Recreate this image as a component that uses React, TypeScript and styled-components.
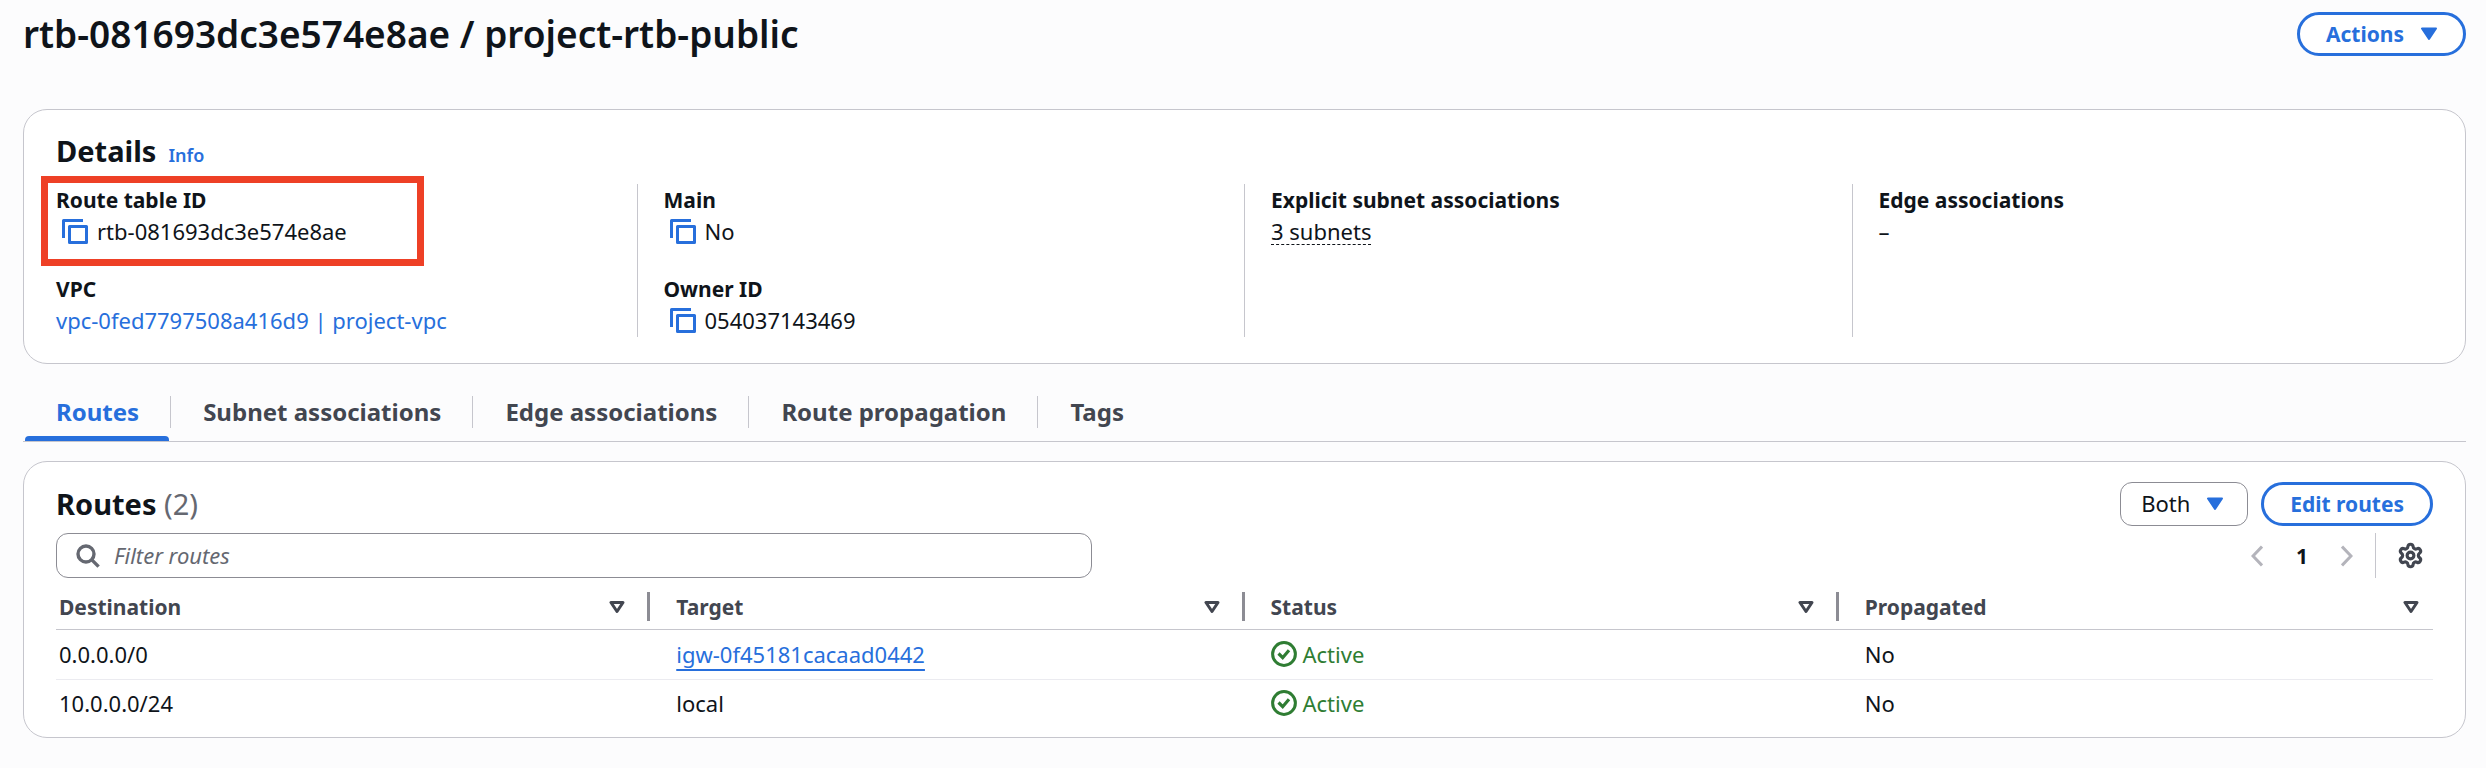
import React from 'react';
import styled, { createGlobalStyle } from 'styled-components';
import { Settings } from 'lucide-react';

const color = {
  page: '#fcfcfd',
  surface: '#ffffff',
  text: '#0f141a',
  heading: '#424650',
  muted: '#656871',
  link: '#276fdc',
  border: '#c6c6cd',
  rowBorder: '#ebebf0',
  control: '#8c8c94',
  disabled: '#b4b4bb',
  success: '#2f7d33',
  highlight: '#ee4026',
};

const GlobalStyle = createGlobalStyle`
  *, *::before, *::after { box-sizing: border-box; }
  body {
    margin: 0;
    background: ${color.page};
    color: ${color.text};
    font-family: "Noto Sans", "Open Sans", sans-serif;
    font-size: 22px;
    line-height: 32px;
  }
  button, input, select { font: inherit; color: inherit; }
  h1, h2, dl, dt, dd { margin: 0; }
  svg { display: block; flex: none; }
`;

const Page = styled.main`
  padding: 12px 20px 30px 23px;
`;

const PageHeader = styled.header`
  display: flex;
  align-items: center;
  justify-content: space-between;
  gap: 20px;
  margin-bottom: 53px;
`;

const PageTitle = styled.h1`
  font-size: 37px;
  font-weight: 600;
  line-height: 44px;
`;

const OutlineButton = styled.button`
  display: flex;
  align-items: center;
  gap: 17px;
  height: 44px;
  padding: 0 26px;
  border: 3px solid ${color.link};
  border-radius: 22px;
  background: ${color.surface};
  color: ${color.link};
  font-size: 21px;
  font-weight: 700;
  white-space: nowrap;
`;

const Card = styled.section`
  padding: 20px 32px 9px;
  border: 1px solid ${color.border};
  border-radius: 24px;
  background: ${color.surface};
`;

const DetailsCard = styled(Card)`
  padding: 21px 32px 26px;
`;

const SectionHeader = styled.div`
  display: flex;
  align-items: baseline;
  gap: 12px;
  margin-bottom: 13px;
`;

const SectionTitle = styled.h2`
  font-size: 29px;
  font-weight: 700;
  line-height: 40px;
`;

const Count = styled.span`
  color: ${color.muted};
  font-weight: 400;
`;

const InfoLink = styled.a`
  color: ${color.link};
  font-size: 18px;
  font-weight: 600;
  text-decoration: none;
`;

const DetailsGrid = styled.div`
  display: grid;
  grid-template-columns: repeat(4, 1fr);
  margin: 0 -26px 0 -27px;
`;

const DetailsColumn = styled.dl`
  display: flex;
  flex-direction: column;
  gap: 27px;
  padding: 0 26px 2px;
  border-left: 1px solid ${color.border};

  &:first-child { border-left-color: transparent; }
`;

const Field = styled.div`
  position: relative;
`;

const FieldLabel = styled.dt`
  font-size: 21px;
  font-weight: 700;
`;

const FieldValue = styled.dd`
  display: flex;
  align-items: center;
  line-height: 30px;
`;

const Highlight = styled.div`
  position: absolute;
  top: -8px;
  left: -15px;
  width: 383px;
  height: 90px;
  border: 7px solid ${color.highlight};
  pointer-events: none;
`;

const IconButton = styled.button`
  display: flex;
  padding: 0;
  border: 0;
  background: none;
`;

const CopyButton = styled(IconButton)`
  margin: 0 9px 0 6px;
  color: ${color.link};
`;

const TextLink = styled.a<{ $underlined?: boolean }>`
  color: ${color.link};
  text-decoration: ${p => (p.$underlined ? 'underline' : 'none')};
  text-decoration-thickness: 2px;
  text-decoration-skip-ink: none;
  text-underline-offset: 6px;
`;

const PopoverTrigger = styled.button`
  padding: 0;
  border: 0;
  background: none;
  text-decoration: underline dashed 1px;
  text-decoration-skip-ink: none;
  text-underline-offset: 4px;
`;

const TabList = styled.div`
  display: flex;
  margin: 32px 0 19px;
  padding-left: 1px;
  border-bottom: 1px solid ${color.border};
`;

const TabItem = styled.div`
  display: flex;
  align-items: flex-start;

  & + &::before {
    content: '';
    width: 1px;
    height: 32px;
    background: ${color.border};
  }
`;

const Tab = styled.button<{ $active?: boolean }>`
  position: relative;
  padding: 0 31px 13px 32px;
  border: 0;
  background: none;
  color: ${p => (p.$active ? color.link : color.heading)};
  font-size: 24px;
  font-weight: 700;
  line-height: 32px;

  &::after {
    content: '';
    position: absolute;
    inset: auto 1px 0;
    height: 5px;
    border-radius: 4px 4px 0 0;
    background: ${p => (p.$active ? color.link : 'transparent')};
  }
`;

const Toolbar = styled.div`
  display: flex;
  align-items: center;
  justify-content: space-between;
  gap: 20px;
`;

const FilterBar = styled(Toolbar)`
  height: 45px;
  margin: 7px 0 6px;
`;

const Actions = styled.div`
  display: flex;
  gap: 13px;
`;

const SelectBox = styled.label`
  display: grid;
  align-items: center;
  color: ${color.link};

  & > * { grid-area: 1 / 1; }
  & > svg {
    justify-self: end;
    margin-right: 25px;
    pointer-events: none;
  }
`;

const Select = styled.select`
  width: 128px;
  height: 44px;
  padding: 0 20px 2px;
  border: 1px solid ${color.control};
  border-radius: 12px;
  background: ${color.surface};
  color: ${color.text};
  appearance: none;
`;

const SearchBox = styled.label`
  display: flex;
  align-items: center;
  gap: 14px;
  width: 100%;
  max-width: 1036px;
  height: 45px;
  padding: 0 19px;
  border: 1px solid ${color.control};
  border-radius: 12px;
  color: ${color.muted};
`;

const SearchInput = styled.input`
  flex: 1;
  min-width: 0;
  padding: 0 0 2px;
  border: 0;
  outline: 0;
  background: none;
  color: ${color.text};

  &::placeholder {
    color: ${color.muted};
    font-style: italic;
    opacity: 1;
  }
`;

const Pagination = styled.nav`
  display: flex;
  align-items: center;
  height: 45px;
  color: ${color.disabled};
`;

const PageNumber = styled.button`
  padding: 0 33px;
  border: 0;
  background: none;
  color: ${color.text};
  font-size: 21px;
  font-weight: 700;
`;

const Preferences = styled.div`
  display: flex;
  align-items: center;
  height: 45px;
  margin-left: 22px;
  padding: 0 9px 0 21px;
  border-left: 1px solid ${color.border};
  color: ${color.heading};
`;

const Table = styled.table`
  width: 100%;
  border-spacing: 0;
  table-layout: fixed;
`;

const HeaderCell = styled.th`
  height: 46px;
  padding: 0 0 0 26px;
  border-bottom: 1px solid ${color.border};
  color: ${color.heading};
  font-size: 21px;
  font-weight: 700;
  text-align: left;

  &:first-child { padding-left: 3px; }
  &:last-child { padding-right: 14px; }
`;

const HeaderContent = styled.div`
  display: flex;
  align-items: center;
`;

const SortButton = styled.button`
  display: flex;
  flex: 1;
  align-items: center;
  justify-content: space-between;
  padding: 0;
  border: 0;
  background: none;
`;

const Resizer = styled.span`
  width: 3px;
  height: 29px;
  margin-left: 22px;
  background: ${color.control};
`;

const Cell = styled.td`
  height: 50px;
  padding: 0 0 2px 26px;
  border-bottom: 1px solid ${color.rowBorder};

  &:first-child { padding-left: 3px; }
  tr:last-child > & {
    height: 48px;
    border-bottom: 0;
  }
`;

const Status = styled.span`
  display: flex;
  align-items: center;
  gap: 6px;
  color: ${color.success};
`;

const CaretFilled = () => (
  <svg width="16" height="14" viewBox="0 0 16 14" fill="currentColor" stroke="currentColor" strokeWidth="2" strokeLinejoin="round" aria-hidden="true">
    <path d="M1 1.5h14L8 12z" />
  </svg>
);

const CaretOutline = () => (
  <svg width="16" height="14" viewBox="0 0 16 14" fill="none" stroke="currentColor" strokeWidth="3" strokeLinejoin="round" aria-hidden="true">
    <path d="M2 2.5h12L8 11.5z" />
  </svg>
);

const CopyIcon = () => (
  <svg width="26" height="25" viewBox="0 0 26 25" fill="none" stroke="currentColor" strokeWidth="3" aria-hidden="true">
    <path d="M1.5 19V1.5H21" strokeLinejoin="round" />
    <path d="M7.5 7.5h17v16h-17z" strokeLinejoin="round" />
  </svg>
);

const SearchIcon = () => (
  <svg width="24" height="24" viewBox="0 0 24 24" fill="none" stroke="currentColor" strokeWidth="3.4" aria-hidden="true">
    <circle cx="10" cy="10" r="8" />
    <path d="M15.6 15.6l7 7" />
  </svg>
);

const Chevron = ({ d }: { d: string }) => (
  <svg width="12" height="22" viewBox="0 0 12 22" fill="none" stroke="currentColor" strokeWidth="3" aria-hidden="true">
    <path d={d} />
  </svg>
);

const SuccessIcon = () => (
  <svg width="26" height="26" viewBox="0 0 26 26" fill="none" stroke="currentColor" strokeWidth="3" aria-hidden="true">
    <circle cx="13" cy="13" r="11.4" />
    <path d="M7.5 12.5l4.2 4.2 6.3-7.5" strokeWidth="3.2" />
  </svg>
);

const Copyable = ({ text }: { text: string }) => (
  <>
    <CopyButton aria-label={`Copy ${text}`}>
      <CopyIcon />
    </CopyButton>
    {text}
  </>
);

type DetailField = { label: string; value: React.ReactNode; highlighted?: boolean };

const details: DetailField[][] = [
  [
    { label: 'Route table ID', value: <Copyable text="rtb-081693dc3e574e8ae" />, highlighted: true },
    { label: 'VPC', value: <TextLink href="#vpc">vpc-0fed7797508a416d9 | project-vpc</TextLink> },
  ],
  [
    { label: 'Main', value: <Copyable text="No" /> },
    { label: 'Owner ID', value: <Copyable text="054037143469" /> },
  ],
  [{ label: 'Explicit subnet associations', value: <PopoverTrigger>3 subnets</PopoverTrigger> }],
  [{ label: 'Edge associations', value: '–' }],
];

const tabs = ['Routes', 'Subnet associations', 'Edge associations', 'Route propagation', 'Tags'];
const columns = ['Destination', 'Target', 'Status', 'Propagated'];
const routes = [
  {
    destination: '0.0.0.0/0',
    target: <TextLink href="#igw" $underlined>igw-0f45181cacaad0442</TextLink>,
    status: 'Active',
    propagated: 'No',
  },
  { destination: '10.0.0.0/24', target: 'local', status: 'Active', propagated: 'No' },
];

export default function App() {
  return (
    <>
      <GlobalStyle />
      <Page>
        <PageHeader>
          <PageTitle>rtb-081693dc3e574e8ae / project-rtb-public</PageTitle>
          <OutlineButton>
            Actions
            <CaretFilled />
          </OutlineButton>
        </PageHeader>

        <DetailsCard>
          <SectionHeader>
            <SectionTitle>Details</SectionTitle>
            <InfoLink href="#info">Info</InfoLink>
          </SectionHeader>
          <DetailsGrid>
            {details.map(fields => (
              <DetailsColumn key={fields[0].label}>
                {fields.map(field => (
                  <Field key={field.label}>
                    <FieldLabel>{field.label}</FieldLabel>
                    <FieldValue>{field.value}</FieldValue>
                    {field.highlighted && <Highlight />}
                  </Field>
                ))}
              </DetailsColumn>
            ))}
          </DetailsGrid>
        </DetailsCard>

        <TabList role="tablist">
          {tabs.map((tab, i) => (
            <TabItem key={tab} role="presentation">
              <Tab role="tab" aria-selected={i === 0} $active={i === 0}>
                {tab}
              </Tab>
            </TabItem>
          ))}
        </TabList>

        <Card>
          <Toolbar>
            <SectionTitle>
              Routes <Count>(2)</Count>
            </SectionTitle>
            <Actions>
              <SelectBox>
                <Select aria-label="Route type" defaultValue="Both">
                  <option>Both</option>
                </Select>
                <CaretFilled />
              </SelectBox>
              <OutlineButton>Edit routes</OutlineButton>
            </Actions>
          </Toolbar>

          <FilterBar>
            <SearchBox>
              <SearchIcon />
              <SearchInput type="text" placeholder="Filter routes" aria-label="Filter routes" />
            </SearchBox>
            <Pagination aria-label="Pagination">
              <IconButton aria-label="Previous page" disabled>
                <Chevron d="M11 1.5L2 11l9 9.5" />
              </IconButton>
              <PageNumber>1</PageNumber>
              <IconButton aria-label="Next page" disabled>
                <Chevron d="M1 1.5L10 11l-9 9.5" />
              </IconButton>
              <Preferences>
                <IconButton aria-label="Preferences">
                  <Settings size={27} strokeWidth={2.8} />
                </IconButton>
              </Preferences>
            </Pagination>
          </FilterBar>

          <Table>
            <thead>
              <tr>
                {columns.map((column, i) => (
                  <HeaderCell key={column} scope="col">
                    <HeaderContent>
                      <SortButton>
                        {column}
                        <CaretOutline />
                      </SortButton>
                      {i < columns.length - 1 && <Resizer />}
                    </HeaderContent>
                  </HeaderCell>
                ))}
              </tr>
            </thead>
            <tbody>
              {routes.map(route => (
                <tr key={route.destination}>
                  <Cell>{route.destination}</Cell>
                  <Cell>{route.target}</Cell>
                  <Cell>
                    <Status>
                      <SuccessIcon />
                      {route.status}
                    </Status>
                  </Cell>
                  <Cell>{route.propagated}</Cell>
                </tr>
              ))}
            </tbody>
          </Table>
        </Card>
      </Page>
    </>
  );
}
